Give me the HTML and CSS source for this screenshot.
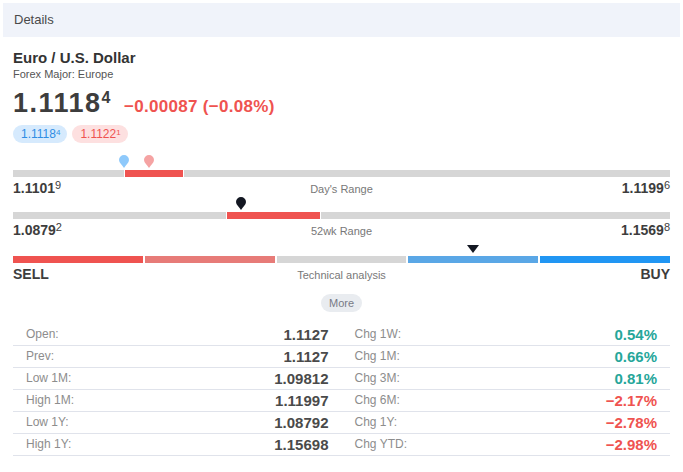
FILE: index.html
```html
<!DOCTYPE html>
<html lang="en">
<head>
    <meta charset="UTF-8">
    <title>Details</title>
    <link rel="stylesheet" href="styles.css">
</head>
<body>
    <div class="panel">
        <div class="panel-head">Details</div>
        <div class="panel-body">
            <div class="symbol-name">Euro / U.S. Dollar</div>
            <div class="symbol-type">Forex Major: Europe</div>
            <div class="price-line">
                <span class="last">1.1118<sup>4</sup></span>
                <span class="change">&minus;0.00087 (&minus;0.08%)</span>
            </div>
            <div class="pills">
                <span class="pill bid">1.1118<sup>4</sup></span>
                <span class="pill ask">1.1122<sup>1</sup></span>
            </div>

            <div class="range">
                <div class="markers">
                    <svg class="pin" style="left: 16.9%" viewBox="0 0 10 13"><path d="M5 13C3 10 0 7.5 0 5a5 5 0 0 1 10 0c0 2.5-3 5-5 8z" fill="#8ec9fb"/></svg>
                    <svg class="pin" style="left: 20.7%" viewBox="0 0 10 13"><path d="M5 13C3 10 0 7.5 0 5a5 5 0 0 1 10 0c0 2.5-3 5-5 8z" fill="#f5a3a3"/></svg>
                </div>
                <div class="bar">
                    <div class="seg grey" style="width: 16.9%"></div>
                    <div class="seg red" style="width: 8.8%"></div>
                    <div class="seg grey fill"></div>
                </div>
                <div class="range-labels">
                    <span class="lo">1.1101<sup>9</sup></span>
                    <span class="caption">Day's Range</span>
                    <span class="hi">1.1199<sup>6</sup></span>
                </div>
            </div>

            <div class="range">
                <div class="markers">
                    <svg class="pin" style="left: 34.7%" viewBox="0 0 10 13"><path d="M5 13C3 10 0 7.5 0 5a5 5 0 0 1 10 0c0 2.5-3 5-5 8z" fill="#131722"/></svg>
                </div>
                <div class="bar">
                    <div class="seg grey" style="width: 32.4%"></div>
                    <div class="seg red" style="width: 14.2%"></div>
                    <div class="seg grey fill"></div>
                </div>
                <div class="range-labels">
                    <span class="lo">1.0879<sup>2</sup></span>
                    <span class="caption">52wk Range</span>
                    <span class="hi">1.1569<sup>8</sup></span>
                </div>
            </div>

            <div class="range tech">
                <div class="markers">
                    <svg class="arrow" style="left: 70%" viewBox="0 0 12 8"><path d="M0 0h12L6 8z" fill="#131722"/></svg>
                </div>
                <div class="bar split">
                    <div class="seg strong-sell"></div>
                    <div class="seg sell"></div>
                    <div class="seg neutral"></div>
                    <div class="seg buy"></div>
                    <div class="seg strong-buy"></div>
                </div>
                <div class="range-labels">
                    <span class="lo word">SELL</span>
                    <span class="caption">Technical analysis</span>
                    <span class="hi word">BUY</span>
                </div>
            </div>

            <div class="more-wrap">
                <button class="more">More</button>
            </div>

            <div class="stats">
                <div class="stats-row">
                    <span class="label">Open:</span><span class="value">1.1127</span>
                    <span class="label">Chg 1W:</span><span class="value up">0.54%</span>
                </div>
                <div class="stats-row">
                    <span class="label">Prev:</span><span class="value">1.1127</span>
                    <span class="label">Chg 1M:</span><span class="value up">0.66%</span>
                </div>
                <div class="stats-row">
                    <span class="label">Low 1M:</span><span class="value">1.09812</span>
                    <span class="label">Chg 3M:</span><span class="value up">0.81%</span>
                </div>
                <div class="stats-row">
                    <span class="label">High 1M:</span><span class="value">1.11997</span>
                    <span class="label">Chg 6M:</span><span class="value down">&minus;2.17%</span>
                </div>
                <div class="stats-row">
                    <span class="label">Low 1Y:</span><span class="value">1.08792</span>
                    <span class="label">Chg 1Y:</span><span class="value down">&minus;2.78%</span>
                </div>
                <div class="stats-row">
                    <span class="label">High 1Y:</span><span class="value">1.15698</span>
                    <span class="label">Chg YTD:</span><span class="value down">&minus;2.98%</span>
                </div>
            </div>
        </div>
    </div>
</body>
</html>
```

FILE: styles.css
```css
* {
    margin: 0;
    padding: 0;
    box-sizing: border-box;
}

body {
    background-color: #fff;
    font-family: "Liberation Sans", Arial, sans-serif;
    color: #4a4a4a;
}

sup {
    line-height: 0;
}

.panel {
    margin: 3px;
}

.panel-head {
    height: 34px;
    line-height: 34px;
    padding-left: 11px;
    background-color: #f0f3fa;
    font-size: 13px;
    color: #4a4a4a;
}

.panel-body {
    padding: 0 10px;
}

.symbol-name {
    margin-top: 12px;
    font-size: 15px;
    line-height: 18px;
    font-weight: bold;
    color: #333;
}

.symbol-type {
    font-size: 11px;
    line-height: 14px;
    color: #555;
}

.price-line {
    margin-top: 7px;
    height: 30px;
    line-height: 30px;
    white-space: nowrap;
}

.last {
    font-size: 27px;
    font-weight: bold;
    letter-spacing: 1.5px;
    color: #3d3d3d;
}

.last sup {
    font-size: 16px;
    vertical-align: 9px;
    letter-spacing: 0;
}

.change {
    margin-left: 9px;
    font-size: 17px;
    font-weight: bold;
    letter-spacing: 0.3px;
    color: #ef5350;
}

.pills {
    margin-top: 7px;
    display: flex;
    gap: 5px;
}

.pill {
    height: 18px;
    line-height: 18px;
    padding: 0 7px 0 8px;
    border-radius: 9px;
    font-size: 12px;
}

.pill sup {
    font-size: 8px;
    vertical-align: 3px;
}

.pill.bid {
    background-color: #d6eafd;
    color: #2f8de4;
}

.pill.ask {
    background-color: #fde0e0;
    color: #ef5350;
}

.range {
    margin-top: 12px;
}

.range + .range {
    margin-top: 0;
}

.markers {
    position: relative;
    height: 15px;
}

.pin {
    position: absolute;
    top: 0;
    width: 10px;
    height: 13px;
    margin-left: -5px;
}

.tech .markers {
    height: 17px;
}

.arrow {
    position: absolute;
    top: 6px;
    width: 12px;
    height: 8px;
    margin-left: -6px;
}

.bar {
    display: flex;
    gap: 1px;
    height: 7px;
}

.bar.split {
    gap: 2px;
}

.seg.fill,
.bar.split .seg {
    flex: 1;
}

.seg.grey,
.seg.neutral {
    background-color: #d6d6d6;
}

.seg.red,
.seg.strong-sell {
    background-color: #ef5350;
}

.seg.sell {
    background-color: #e77b78;
}

.seg.buy {
    background-color: #5aa7e6;
}

.seg.strong-buy {
    background-color: #2196f3;
}

.range-labels {
    display: grid;
    grid-template-columns: 1fr auto 1fr;
    align-items: center;
    height: 20px;
    padding-top: 1px;
}

.range-labels .lo,
.range-labels .hi {
    font-size: 14px;
    font-weight: bold;
    color: #3d3d3d;
}

.range-labels .hi {
    text-align: right;
}

.range-labels sup {
    font-size: 11px;
    font-weight: normal;
    vertical-align: 4px;
}

.range-labels .caption {
    font-size: 11px;
    color: #787878;
    padding-top: 3px;
}

.more-wrap {
    margin-top: 10px;
    text-align: center;
}

.more {
    height: 18px;
    padding: 0 8px;
    border: none;
    border-radius: 9px;
    background-color: #e9ecf0;
    font-family: inherit;
    font-size: 11px;
    color: #787b86;
}

.stats {
    margin-top: 12px;
}

.stats-row {
    display: grid;
    grid-template-columns: 1fr 1fr 1fr 1fr;
    height: 22px;
    line-height: 21px;
    border-bottom: 1px solid #e0e3eb;
}

.label {
    padding-left: 13px;
    font-size: 12px;
    color: #8d8d8d;
}

.value {
    padding-right: 13px;
    text-align: right;
    font-size: 15px;
    font-weight: bold;
    color: #4a4a4a;
}

.value.up {
    color: #26a69a;
}

.value.down {
    color: #ef5350;
}
```
